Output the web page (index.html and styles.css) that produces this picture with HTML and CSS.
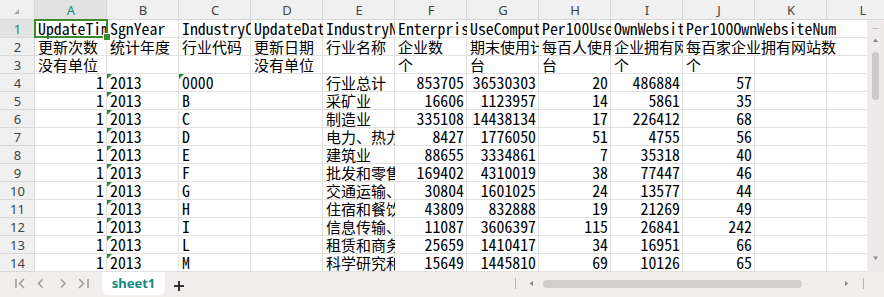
FILE: index.html
```html
<!DOCTYPE html>
<html lang="zh-CN">
<head>
    <meta charset="UTF-8">
    <title>sheet1</title>
    <link rel="stylesheet" href="styles.css">
</head>
<body>

<div class="book">
    <div class="sheet">
        <div class="grid">
            <div class="hd corner"></div>
            <div class="hd ch on">A</div>
            <div class="hd ch">B</div>
            <div class="hd ch">C</div>
            <div class="hd ch">D</div>
            <div class="hd ch">E</div>
            <div class="hd ch">F</div>
            <div class="hd ch">G</div>
            <div class="hd ch">H</div>
            <div class="hd ch">I</div>
            <div class="hd ch">J</div>
            <div class="hd ch">K</div>
            <div class="hd ch">L</div>

            <div class="hd rh on">1</div>
            <div class="c">UpdateTime</div>
            <div class="c">SgnYear</div>
            <div class="c">IndustryCode</div>
            <div class="c">UpdateDate</div>
            <div class="c">IndustryName</div>
            <div class="c">EnterpriseNum</div>
            <div class="c">UseComputerNum</div>
            <div class="c">Per100UseComputerNum</div>
            <div class="c">OwnWebsiteNum</div>
            <div class="c span3">Per100OwnWebsiteNum</div>

            <div class="hd rh">2</div>
            <div class="c zh">更新次数</div>
            <div class="c zh">统计年度</div>
            <div class="c zh">行业代码</div>
            <div class="c zh">更新日期</div>
            <div class="c zh">行业名称</div>
            <div class="c zh">企业数</div>
            <div class="c zh">期末使用计算机数</div>
            <div class="c zh">每百人使用计算机数</div>
            <div class="c zh">企业拥有网站数</div>
            <div class="c zh span3">每百家企业拥有网站数</div>

            <div class="hd rh">3</div>
            <div class="c zh">没有单位</div>
            <div class="c"></div>
            <div class="c"></div>
            <div class="c zh">没有单位</div>
            <div class="c"></div>
            <div class="c zh">个</div>
            <div class="c zh">台</div>
            <div class="c zh">台</div>
            <div class="c zh">个</div>
            <div class="c zh">个</div>
            <div class="c"></div>
            <div class="c"></div>

            <div class="hd rh">4</div>
            <div class="c n">1</div>
            <div class="c t">2013</div>
            <div class="c t">0000</div>
            <div class="c"></div>
            <div class="c zh">行业总计</div>
            <div class="c n">853705</div>
            <div class="c n">36530303</div>
            <div class="c n">20</div>
            <div class="c n">486884</div>
            <div class="c n">57</div>
            <div class="c"></div>
            <div class="c"></div>

            <div class="hd rh">5</div>
            <div class="c n">1</div>
            <div class="c t">2013</div>
            <div class="c">B</div>
            <div class="c"></div>
            <div class="c zh">采矿业</div>
            <div class="c n">16606</div>
            <div class="c n">1123957</div>
            <div class="c n">14</div>
            <div class="c n">5861</div>
            <div class="c n">35</div>
            <div class="c"></div>
            <div class="c"></div>

            <div class="hd rh">6</div>
            <div class="c n">1</div>
            <div class="c t">2013</div>
            <div class="c">C</div>
            <div class="c"></div>
            <div class="c zh">制造业</div>
            <div class="c n">335108</div>
            <div class="c n">14438134</div>
            <div class="c n">17</div>
            <div class="c n">226412</div>
            <div class="c n">68</div>
            <div class="c"></div>
            <div class="c"></div>

            <div class="hd rh">7</div>
            <div class="c n">1</div>
            <div class="c t">2013</div>
            <div class="c">D</div>
            <div class="c"></div>
            <div class="c zh">电力、热力、燃气及水生产和供应业</div>
            <div class="c n">8427</div>
            <div class="c n">1776050</div>
            <div class="c n">51</div>
            <div class="c n">4755</div>
            <div class="c n">56</div>
            <div class="c"></div>
            <div class="c"></div>

            <div class="hd rh">8</div>
            <div class="c n">1</div>
            <div class="c t">2013</div>
            <div class="c">E</div>
            <div class="c"></div>
            <div class="c zh">建筑业</div>
            <div class="c n">88655</div>
            <div class="c n">3334861</div>
            <div class="c n">7</div>
            <div class="c n">35318</div>
            <div class="c n">40</div>
            <div class="c"></div>
            <div class="c"></div>

            <div class="hd rh">9</div>
            <div class="c n">1</div>
            <div class="c t">2013</div>
            <div class="c">F</div>
            <div class="c"></div>
            <div class="c zh">批发和零售业</div>
            <div class="c n">169402</div>
            <div class="c n">4310019</div>
            <div class="c n">38</div>
            <div class="c n">77447</div>
            <div class="c n">46</div>
            <div class="c"></div>
            <div class="c"></div>

            <div class="hd rh">10</div>
            <div class="c n">1</div>
            <div class="c t">2013</div>
            <div class="c">G</div>
            <div class="c"></div>
            <div class="c zh">交通运输、仓储和邮政业</div>
            <div class="c n">30804</div>
            <div class="c n">1601025</div>
            <div class="c n">24</div>
            <div class="c n">13577</div>
            <div class="c n">44</div>
            <div class="c"></div>
            <div class="c"></div>

            <div class="hd rh">11</div>
            <div class="c n">1</div>
            <div class="c t">2013</div>
            <div class="c">H</div>
            <div class="c"></div>
            <div class="c zh">住宿和餐饮业</div>
            <div class="c n">43809</div>
            <div class="c n">832888</div>
            <div class="c n">19</div>
            <div class="c n">21269</div>
            <div class="c n">49</div>
            <div class="c"></div>
            <div class="c"></div>

            <div class="hd rh">12</div>
            <div class="c n">1</div>
            <div class="c t">2013</div>
            <div class="c">I</div>
            <div class="c"></div>
            <div class="c zh">信息传输、软件和信息技术服务业</div>
            <div class="c n">11087</div>
            <div class="c n">3606397</div>
            <div class="c n">115</div>
            <div class="c n">26841</div>
            <div class="c n">242</div>
            <div class="c"></div>
            <div class="c"></div>

            <div class="hd rh">13</div>
            <div class="c n">1</div>
            <div class="c t">2013</div>
            <div class="c">L</div>
            <div class="c"></div>
            <div class="c zh">租赁和商务服务业</div>
            <div class="c n">25659</div>
            <div class="c n">1410417</div>
            <div class="c n">34</div>
            <div class="c n">16951</div>
            <div class="c n">66</div>
            <div class="c"></div>
            <div class="c"></div>

            <div class="hd rh">14</div>
            <div class="c n">1</div>
            <div class="c t">2013</div>
            <div class="c">M</div>
            <div class="c"></div>
            <div class="c zh">科学研究和技术服务业</div>
            <div class="c n">15649</div>
            <div class="c n">1445810</div>
            <div class="c n">69</div>
            <div class="c n">10126</div>
            <div class="c n">65</div>
            <div class="c"></div>
            <div class="c"></div>
        </div>

        <!-- active cell A1 -->
        <div class="sel"></div>

        <div class="vscroll">
            <svg width="17" height="252" viewBox="0 0 17 252">
                <line x1="5.5" y1="8.5" x2="11.5" y2="8.5" stroke="#bdbab9" stroke-width="1"/>
                <path d="M6 22 L8.5 18.5 L11 22 Z" fill="#8d8a89"/>
                <rect x="5" y="32" width="7" height="48" rx="3.5" fill="#cdc9c8"/>
                <path d="M6 236.5 L8.5 240 L11 236.5 Z" fill="#8d8a89"/>
            </svg>
        </div>
    </div>

    <div class="tabbar">
        <svg class="nav" width="100" height="25" viewBox="0 0 100 25">
            <g fill="none" stroke="#a3a09f" stroke-width="1.6">
                <line x1="16" y1="7" x2="16" y2="16"/>
                <path d="M24 7 L19.5 11.5 L24 16"/>
                <path d="M42.5 7.5 L38.5 11.5 L42.5 15.5"/>
                <path d="M61 7.5 L65 11.5 L61 15.5"/>
                <path d="M79 7 L83.5 11.5 L79 16"/>
                <line x1="88" y1="7" x2="88" y2="16"/>
            </g>
        </svg>
        <div class="tab">sheet1</div>
        <svg class="add" width="12" height="12" viewBox="0 0 12 12">
            <path d="M6 1 V11 M1 6 H11" stroke="#333" stroke-width="2"/>
        </svg>
        <svg class="hscroll" width="376" height="25" viewBox="0 0 376 25">
            <line x1="7.5" y1="6" x2="7.5" y2="17" stroke="#b8b5b4"/>
            <path d="M25 9 L21.5 11.5 L25 14 Z" fill="#8d8a89"/>
            <rect x="35" y="8" width="259" height="8" rx="4" fill="#d2cecd"/>
            <path d="M337 9 L340.5 11.5 L337 14 Z" fill="#8d8a89"/>
            <line x1="355.5" y1="6" x2="355.5" y2="17" stroke="#b8b5b4"/>
        </svg>
    </div>
</div>

</body>
</html>
```

FILE: styles.css
```css
* {
    box-sizing: border-box;
}

body {
    margin: 0;
    width: 884px;
    height: 297px;
    overflow: hidden;
    background-color: #fff;
    font-family: "Noto Sans Mono CJK SC", "Liberation Mono", monospace;
}

.book {
    display: flex;
    flex-direction: column;
    height: 297px;
}

.sheet {
    position: relative;
    height: 272px;
    overflow: hidden;
}

.grid {
    display: grid;
    grid-template-columns: 35px repeat(12, 72px);
    grid-template-rows: 20px repeat(14, 18px);
    width: 899px;
}

/* cells - grid lines drawn as inset shadows so text keeps the full row height */
.c {
    position: relative;
    box-shadow: inset -1px -1px 0 #e1e1e1;
    padding: 0 3px;
    font-size: 15.8px;
    line-height: 18px;
    color: #000;
    white-space: nowrap;
    overflow-x: clip;
    overflow-y: visible;
}

.c.zh {
    font-family: "Noto Sans CJK SC", sans-serif;
    font-size: 15px;
}

.c.n {
    text-align: right;
}

.c.span3 {
    grid-column: span 3;
}

/* number stored as text marker */
.c.t::before {
    content: "";
    position: absolute;
    top: 0;
    left: 0;
    border-top: 5px solid #1e8a3a;
    border-right: 5px solid transparent;
}

/* headers */
.hd {
    background-color: #f0f0f0;
    box-shadow: inset -1px -1px 0 #d8d8d8;
    font-family: "Noto Sans", "Noto Sans CJK SC", sans-serif;
    font-size: 13px;
    color: #444;
    text-align: center;
}

.ch {
    line-height: 20px;
}

.rh {
    line-height: 18px;
}

.hd.on {
    background-color: #e2e2e2;
    color: #1b8a70;
}

.corner {
    display: flex;
    justify-content: flex-end;
    align-items: flex-end;
    padding: 0 16px 6px 0;
}

.corner::after {
    content: "";
    border-left: 5px solid transparent;
    border-bottom: 5px solid #a9a9a9;
}

.sel {
    position: absolute;
    left: 34px;
    top: 19px;
    width: 74px;
    height: 19px;
    border: 2px solid #3c8a2d;
}

.sel::after {
    content: "";
    position: absolute;
    right: -5px;
    bottom: -5px;
    width: 6px;
    height: 6px;
    background-color: #3c8a2d;
    border: 1px solid #fff;
}

.vscroll {
    position: absolute;
    top: 20px;
    right: 0;
    width: 17px;
    height: 252px;
    background-color: #efebea;
}

.vscroll svg {
    display: block;
}

/* bottom bar */
.tabbar {
    display: flex;
    align-items: flex-start;
    height: 25px;
    background-color: #f1eeed;
}

.nav {
    flex: none;
}

.tab {
    margin-left: 2px;
    width: 63px;
    height: 23px;
    background-color: #fff;
    border-radius: 0 0 6px 6px;
    font-family: "Noto Sans", sans-serif;
    font-size: 13px;
    font-weight: bold;
    line-height: 22px;
    color: #148a82;
    text-align: center;
}

.add {
    margin: 8px 0 0 8px;
}

.hscroll {
    margin-left: auto;
}
```
